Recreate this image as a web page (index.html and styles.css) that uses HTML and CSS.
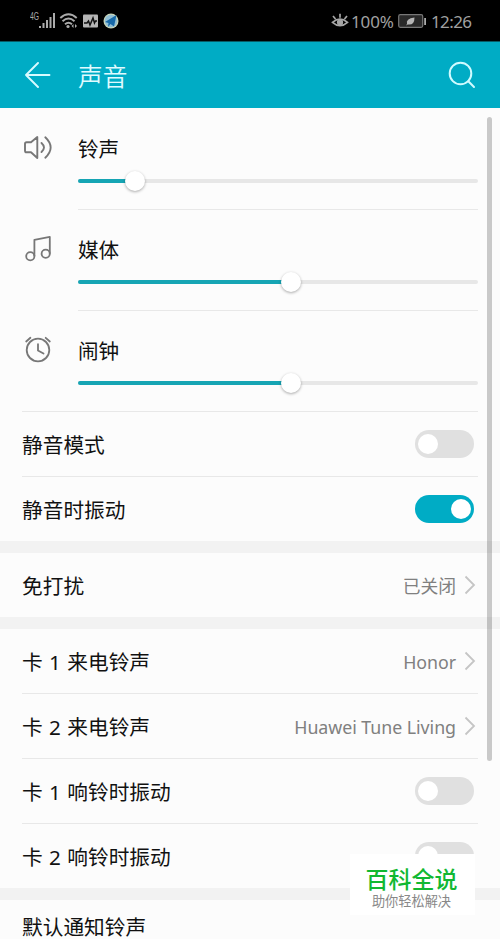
FILE: index.html
```html
<!DOCTYPE html>
<html lang="zh-CN">
<head>
<meta charset="utf-8">
<title>声音</title>
<link rel="stylesheet" href="styles.css">
</head>
<body>
<div class="screen">
  <div class="status">
    <svg class="status-left" width="92" height="22" viewBox="0 0 92 22" fill="none">
      <text class="net" x="0" y="10" textLength="9" lengthAdjust="spacingAndGlyphs">4G</text>
      <g fill="#aaa"><rect x="9" y="16" width="2" height="2"/><rect x="12.500" y="13" width="2" height="5"/><rect x="16" y="10" width="2" height="8"/><rect x="19.500" y="7" width="2" height="11"/><rect x="23" y="3" width="2" height="15"/></g>
      <g stroke="#aaa" stroke-width="1.900"><path d="M30.300 8Q38.500 .5 46.700 8"/><path d="M32.500 11.300Q38.500 5.800 44.500 11.300"/><path d="M35 14.300Q38.500 11 42 14.300"/></g>
      <circle cx="38" cy="16.500" r="1.600" fill="#aaa"/><path d="M43.500 14v4l-2-2zM45 14v4l2-2z" fill="#aaa"/>
      <rect x="53" y="4.500" width="15" height="13" rx="1" fill="#b5b5b5"/>
      <path d="M54 13h3l1.500-2 1.500 4 3-7 1.500 5 1-2h1.500" stroke="#111" stroke-width="1.500"/>
      <circle cx="81" cy="11" r="7.500" fill="#c5d3b8"/><circle cx="81" cy="11" r="6.200" fill="#91bfd5"/>
      <path d="M75 12 86.500 5 84 16.500 80.500 14 78 17 78.500 13z" fill="#1769a8"/>
    </svg>
    <div class="status-right">
      <svg width="18" height="18" viewBox="0 0 18 18" fill="none" stroke="#a6a6a6" stroke-width="1.700"><path d="M1.500 10.300Q9 4 16.500 10.300Q9 17 1.500 10.300ZM9 5.800V1.800M4.500 7 2 4M13.500 7 16 4"/><circle cx="9" cy="10.300" r="2.300" fill="#a6a6a6"/></svg>
      <span class="percent">100%</span>
      <svg class="battery" width="29" height="14" viewBox="0 0 29 14" fill="none"><rect x=".7" y=".7" width="24" height="12.600" rx="1.500" fill="#292929" stroke="#777" stroke-width="1.200"/><path d="M26.200 4h1.800v7h-1.800z" fill="#aaa"/><path d="M8 11.500 9 10Q7.500 4.500 16.500 3.500 16.500 11.500 9.800 10.500Z" fill="#b5b5b5"/></svg>
      <span class="clock">12:26</span>
    </div>
  </div>
  <header class="header">
    <svg width="26" height="26" viewBox="0 0 26 26" fill="none" stroke="#d9fbff" stroke-width="1.900" stroke-linecap="round" stroke-linejoin="round"><path d="M13 1 1 13 13 25M1 13H24.500"/></svg>
    <h1>声音</h1>
    <svg class="search" width="28" height="28" viewBox="0 0 28 28" fill="none" stroke="#d0fbff" stroke-width="2" stroke-linecap="round"><circle cx="12.500" cy="12.500" r="10.800"/><path d="m20.300 20.300 5.700 5.700"/></svg>
  </header>
  <main>
    <section class="volume">
      <svg class="symbol" width="32" height="32" viewBox="0 0 32 32" fill="none" stroke="#777" stroke-width="1.900" stroke-linejoin="round" stroke-linecap="round"><path d="M3 12.800Q3 11.200 4.600 11.200H9L15.300 6V27L9 21.300H4.600Q3 21.300 3 19.700ZM19.500 12Q24.500 16.500 19.500 21M23.300 6.300Q34 16.500 23.300 26.700"/></svg>
      <div class="control"><div class="name">铃声</div><div class="track"><i class="fill" style="width:57px"></i><i class="thumb"></i></div></div>
    </section>
    <section class="volume">
      <svg class="symbol" width="32" height="32" viewBox="0 0 32 32" fill="none" stroke="#777" stroke-width="1.800" stroke-linejoin="round"><circle cx="8.300" cy="24.300" r="4.100"/><circle cx="23.700" cy="21.700" r="4.100"/><path d="M12.400 24.300V7.800L27.800 4.800V21.700"/></svg>
      <div class="control"><div class="name">媒体</div><div class="track"><i class="fill" style="width:213px"></i><i class="thumb"></i></div></div>
    </section>
    <section class="volume">
      <svg class="symbol" width="32" height="32" viewBox="0 0 32 32" fill="none" stroke="#777" stroke-width="1.800" stroke-linecap="round"><circle cx="16" cy="17" r="11.300"/><path d="M16 11.200V17.500L21.500 20.500M4.200 8.500 8.400 4.800M23.700 4.800 27.800 8.500"/></svg>
      <div class="control last"><div class="name">闹钟</div><div class="track"><i class="fill" style="width:213px"></i><i class="thumb"></i></div></div>
    </section>
    <section class="group first">
      <div class="row"><span>静音模式</span><i class="toggle"></i></div>
      <div class="row"><span>静音时振动</span><i class="toggle on"></i></div>
    </section>
    <section class="group">
      <div class="row"><span>免打扰</span><span class="value">已关闭</span><svg class="chevron" width="12" height="20" viewBox="0 0 12 20"><path d="m1.500 1.500 8.500 8.500-8.500 8.500"/></svg></div>
    </section>
    <section class="group">
      <div class="row"><span>卡 1 来电铃声</span><span class="value">Honor</span><svg class="chevron" width="12" height="20" viewBox="0 0 12 20"><path d="m1.500 1.500 8.500 8.500-8.500 8.500"/></svg></div>
      <div class="row"><span>卡 2 来电铃声</span><span class="value">Huawei Tune Living</span><svg class="chevron" width="12" height="20" viewBox="0 0 12 20"><path d="m1.500 1.500 8.500 8.500-8.500 8.500"/></svg></div>
      <div class="row"><span>卡 1 响铃时振动</span><i class="toggle"></i></div>
      <div class="row"><span>卡 2 响铃时振动</span><i class="toggle"></i></div>
    </section>
    <section class="group tail"><div class="row"><span>默认通知铃声</span></div></section>
  </main>
  <div class="scrollbar"></div>
  <aside class="badge"><strong>百科全说</strong><small>助你轻松解决</small></aside>
</div>
</body>
</html>
```

FILE: styles.css
```css
* { box-sizing: border-box; }
body { margin: 0; overflow: hidden; }
.screen {
  position: relative;
  width: 500px;
  height: 939px;
  overflow: hidden;
  background: #fcfcfc;
  color: #111;
  font-family: "Noto Sans", "Noto Sans CJK SC", sans-serif;
}
.status {
  height: 42px;
  background: #000;
  display: flex;
  align-items: center;
  justify-content: space-between;
  padding: 0 28px 0 30px;
  border-bottom: 1px solid #075b66;
}
.net { font: 10px "Liberation Sans", sans-serif; fill: #aaa; }
.status-right {
  display: flex;
  align-items: center;
  color: #a0a0a0;
  font-size: 17px;
  line-height: 22px;
}
.percent { width: 43px; margin: 2px 4px 0 2px; letter-spacing: -.1px; }
.clock { width: 41px; margin: 2px 0 0 4px; white-space: nowrap; letter-spacing: -.6px; }
.header {
  height: 66px;
  background: #00acc5;
  display: flex;
  align-items: center;
  padding: 0 24px 0 25px;
}
h1 {
  margin: 3px 0 0 27px;
  color: #e0fbff;
  font-size: 24.700px;
  font-weight: 350;
  line-height: 36px;
}
.search { margin-left: auto; }
.volume { display: flex; height: 101px; padding-left: 22px; }
.symbol { margin: 23px 24px 0 0; flex: none; }
.control { width: 400px; height: 102px; border-bottom: 1px solid #e8e8e8; padding-top: 26px; }
.name { height: 29px; font-size: 20.600px; line-height: 30px; }
.track {
  height: 4px;
  margin-top: 16px;
  background: #e7e7e7;
  border-radius: 2px;
  display: flex;
  align-items: center;
}
.fill { height: 4px; background: #16a5b4; border-radius: 2px; flex: none; }
.thumb {
  width: 20px;
  height: 20px;
  margin-left: -10px;
  background: #fff;
  border-radius: 50%;
  box-shadow: 0 1px 3px #0005;
}
.last { border: 0; }
.group { border-bottom: 12px solid #f2f2f2; padding: 0 22px; }
.first .row:first-child { border-top: 1px solid #e8e8e8; height: 65px; }
.row {
  display: flex;
  align-items: center;
  height: 65px;
  font-size: 20.700px;
  line-height: 30px;
  word-spacing: 1px;
  white-space: nowrap;
}
.row > span { padding-top: 1px; }
.row + .row { border-top: 1px solid #e8e8e8; }
.group:not(.first) .row:first-child { height: 64px; }
.group.tail .row:first-child { height: 52px; }
.tail { border: 0; }
.toggle {
  width: 59px;
  height: 28px;
  margin: 0 4px 0 auto;
  padding: 4px 3px;
  display: flex;
  background: #e0e0e0;
  border-radius: 14px;
}
.toggle::after { content: ""; width: 20px; height: 20px; border-radius: 50%; background: #fff; }
.on { justify-content: flex-end; background: #00acc5; }
.value { margin-left: auto; color: #808080; font-size: 17.800px; letter-spacing: -.04px; word-spacing: 0; }
.chevron { margin: 0 2px 0 8px; fill: none; stroke: #c5c5c5; stroke-width: 1.800; }
.scrollbar {
  position: absolute;
  left: 487px;
  top: 117px;
  width: 5px;
  height: 644px;
  border-radius: 3px;
  background: #0003;
}
.badge {
  position: absolute;
  left: 350px;
  top: 854px;
  width: 125px;
  height: 61px;
  background: #fff;
  display: flex;
  flex-direction: column;
  align-items: center;
  padding: 11px 2px 0 0;
}
.badge strong { color: #11b832; font-size: 23px; font-weight: 500; line-height: 29px; }
.badge small { color: #888; font-size: 13.200px; line-height: 15px; }
```
